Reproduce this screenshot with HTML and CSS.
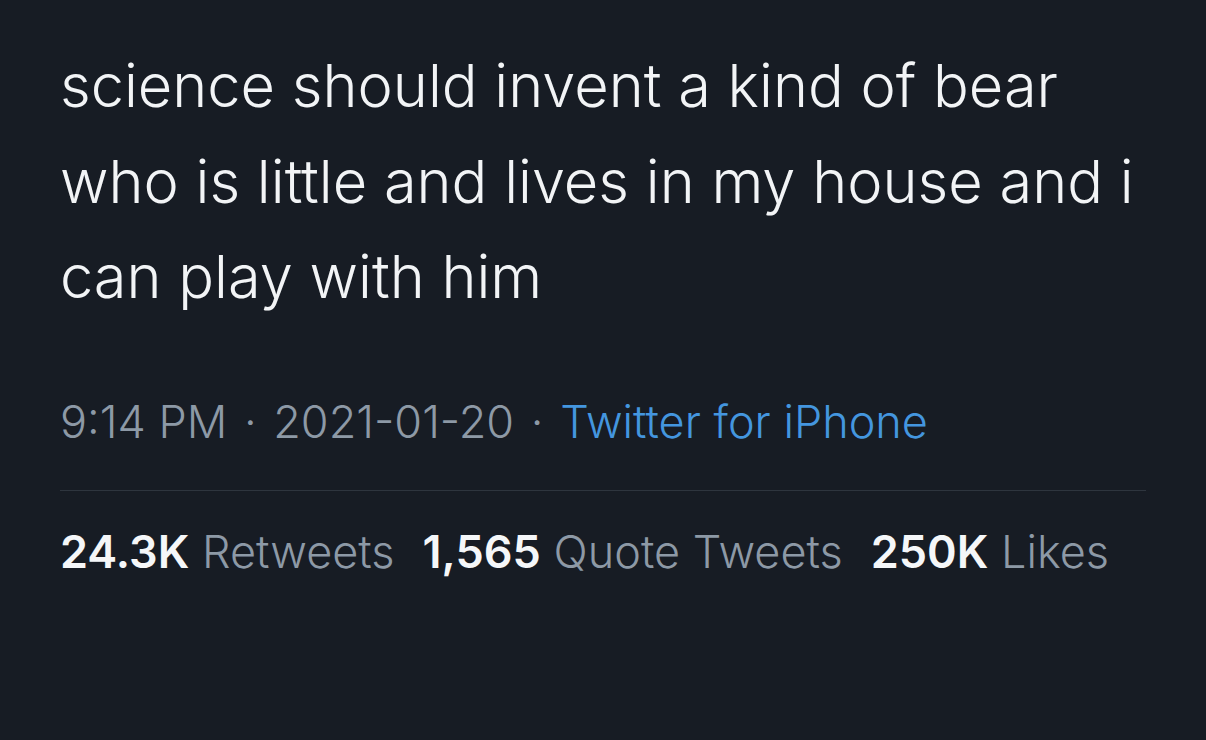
FILE: index.html
```html
<!DOCTYPE html>
<html lang="en">
<head>
    <meta charset="UTF-8">
    <meta name="viewport" content="width=device-width, initial-scale=1.0">
    <title>Tweet</title>
    <link rel="stylesheet" href="styles.css">
</head>
<body>
    <div class="tweet">
        <p class="tweet-text">science should invent a kind of bear who is little and lives in my house and i can play with him</p>

        <div class="tweet-meta">
            <span>9:14 PM</span>
            <span class="dot">·</span>
            <span>2021-01-20</span>
            <span class="dot">·</span>
            <a href="#" class="source">Twitter for iPhone</a>
        </div>

        <div class="tweet-stats">
            <span><b>24.3K</b> Retweets</span>
            <span><b>1,565</b> Quote Tweets</span>
            <span><b>250K</b> Likes</span>
        </div>
    </div>
</body>
</html>
```

FILE: styles.css
```css
* {
    margin: 0;
    padding: 0;
    box-sizing: border-box;
}

body {
    background-color: #171c24;
    font-family: Inter, "Noto Sans", sans-serif;
    width: 1206px;
    height: 740px;
    overflow: hidden;
}

.tweet {
    padding: 38px 60px 0 60px;
    width: 1206px;
}

.tweet-text {
    color: #f2f4f6;
    font-size: 59.5px;
    font-weight: 350;
    line-height: 95.5px;
    width: 1100px;
}

.tweet-meta {
    margin-top: 72px;
    padding-bottom: 43px;
    border-bottom: 1px solid #2e353e;
    color: #8d99a6;
    font-size: 45px;
    font-weight: 350;
    line-height: 50px;
}

.tweet-meta .dot {
    margin: 0 4px;
}

.source {
    color: #4496df;
    text-decoration: none;
}

.tweet-stats {
    display: flex;
    gap: 28px;
    padding-top: 36px;
    color: #8d99a6;
    font-size: 45px;
    font-weight: 350;
    line-height: 50px;
}

.tweet-stats b {
    color: #f5f7f9;
    font-weight: 600;
}
```
